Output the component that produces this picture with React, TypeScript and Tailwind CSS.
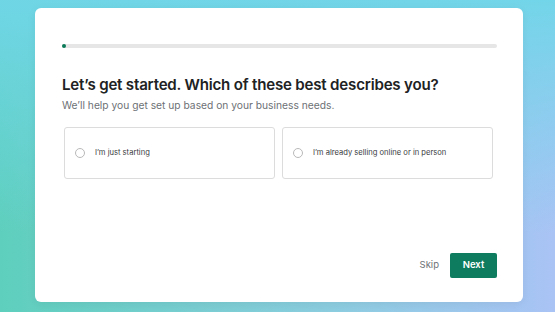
import { useState } from "react";

const options = [
  { id: "starting", label: "I\u2019m just starting" },
  { id: "selling", label: "I\u2019m already selling online or in person" },
];

export default function App() {
  const [picked, setPicked] = useState<string | null>(null);

  return (
    <div
      className="w-[555px] h-[312px] overflow-hidden pt-2 pl-[35px] bg-[linear-gradient(to_bottom,rgba(112,214,232,0.95)_0%,rgba(112,214,232,0)_75%),linear-gradient(to_right,#5ecfbd_0%,#8ccde0_60%,#a9c3f5_100%)]"
      style={{ fontFamily: "Inter, 'Liberation Sans', sans-serif" }}
    >
      <div className="w-[488px] h-[294px] rounded-[6px] bg-white shadow-[0_2px_10px_rgba(0,0,0,0.06)] flex flex-col pl-[27px] pr-[26px] pt-9 pb-6">
        {/* progress */}
        <div className="h-1 w-full rounded-full bg-[#e6e6e6]">
          <div className="h-1 w-[4px] rounded-full bg-[#0b7a58]" />
        </div>

        <h1 className="mt-[27px] text-[15.1px] leading-5 font-semibold tracking-[-0.2px] text-[#202223]">
          Let’s get started. Which of these best describes you?
        </h1>
        <p className="mt-[2px] text-[10.25px] leading-4 text-[#6d7175]">
          We’ll help you get set up based on your business needs.
        </p>

        <div className="mt-[14px] ml-[2px] flex gap-[7px]">
          {options.map((o) => (
            <button
              key={o.id}
              onClick={() => setPicked(o.id)}
              className="w-[211px] h-[52px] flex items-center gap-[10px] pl-[10px] rounded-[3px] border border-[#dcdcdc] bg-white text-left"
            >
              <span
                className={`w-[10px] h-[10px] rounded-full border ${picked === o.id ? "border-[3px] border-[#0b7a58]" : "border-[#b9b9b9]"}`}
              />
              <span className="text-[7.6px] text-[#3b3d3f]">{o.label}</span>
            </button>
          ))}
        </div>

        <div className="mt-auto flex items-center justify-end gap-[11px]">
          <button className="text-[9.5px] text-[#6d7175]">Skip</button>
          <button className="w-[47px] h-[25px] rounded-[2px] bg-[#0e7d5f] text-white text-[9.5px] font-semibold">
            Next
          </button>
        </div>
      </div>
    </div>
  );
}
